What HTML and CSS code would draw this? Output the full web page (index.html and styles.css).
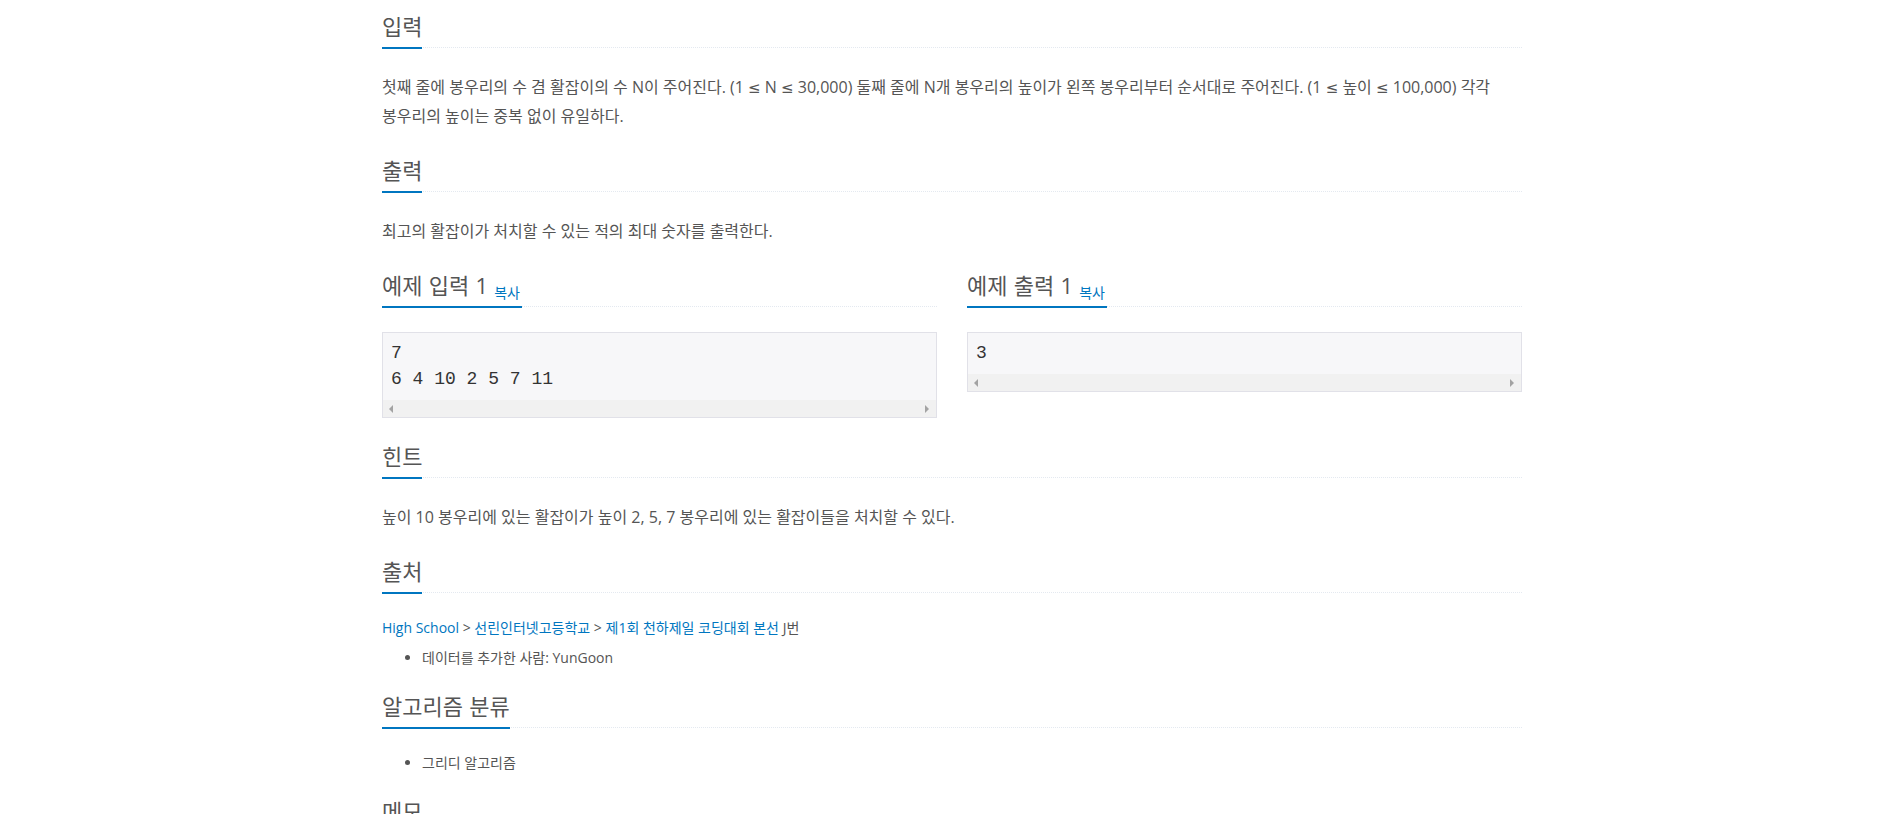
FILE: index.html
```html
<!DOCTYPE html>
<html lang="ko">
<head>
<meta charset="utf-8">
<title>봉우리 활잡이</title>
<link rel="stylesheet" href="styles.css">
</head>
<body>
<div class="container">
  <section class="problem-section">
    <div class="headline"><h2>입력</h2></div>
    <div class="problem-text"><p>첫째 줄에 봉우리의 수 겸 활잡이의 수 N이 주어진다. (1 <span class="op">≤</span> N <span class="op">≤</span> 30,000) 둘째 줄에 N개 봉우리의 높이가 왼쪽 봉우리부터 순서대로 주어진다. (1 <span class="op">≤</span> 높이 <span class="op">≤</span> 100,000) 각각 봉우리의 높이는 중복 없이 유일하다.</p></div>
  </section>

  <section class="problem-section">
    <div class="headline"><h2>출력</h2></div>
    <div class="problem-text"><p>최고의 활잡이가 처치할 수 있는 적의 최대 숫자를 출력한다.</p></div>
  </section>

  <div class="sample-row">
    <section class="problem-section">
      <div class="headline"><h2>예제 입력 1 <button type="button" class="copy-button">복사</button></h2></div>
      <div class="sample">
        <pre class="sampledata">7
6 4 10 2 5 7 11</pre>
        <div class="hscroll"><span class="arr arr-l"></span><span class="arr arr-r"></span></div>
      </div>
    </section>
    <section class="problem-section">
      <div class="headline"><h2>예제 출력 1 <button type="button" class="copy-button">복사</button></h2></div>
      <div class="sample">
        <pre class="sampledata">3</pre>
        <div class="hscroll"><span class="arr arr-l"></span><span class="arr arr-r"></span></div>
      </div>
    </section>
  </div>

  <section class="problem-section">
    <div class="headline"><h2>힌트</h2></div>
    <div class="problem-text"><p>높이 10 봉우리에 있는 활잡이가 높이 2, 5, 7 봉우리에 있는 활잡이들을 처치할 수 있다.</p></div>
  </section>

  <section class="problem-section">
    <div class="headline"><h2>출처</h2></div>
    <p class="source"><a href="#">High School</a> &gt; <a href="#">선린인터넷고등학교</a> &gt; <a href="#">제1회 천하제일 코딩대회 본선</a> J번</p>
    <ul class="plain-list">
      <li>데이터를 추가한 사람: <a class="user" href="#">YunGoon</a></li>
    </ul>
  </section>

  <section class="problem-section">
    <div class="headline"><h2>알고리즘 분류</h2></div>
    <ul class="plain-list">
      <li><a class="tag" href="#">그리디 알고리즘</a></li>
    </ul>
  </section>

  <section class="problem-section">
    <div class="headline"><h2>메모</h2></div>
  </section>
</div>
</body>
</html>
```

FILE: styles.css
```css
html, body {
  margin: 0;
  background: #fff;
}

body {
  padding: 0 0 0 4px;
  font-family: "Open Sans", "Noto Sans CJK KR", sans-serif;
  font-size: 14px;
  line-height: 20px;
  color: #555;
  word-break: keep-all;
}

.container {
  width: 1140px;
  margin: 0 auto;
  padding-top: 1px;
}

.problem-section {
  display: flow-root;
  margin-bottom: 3px;
}

.headline {
  margin: 10px 0 25px 0;
  border-bottom: 1px dotted #e4e9f0;
}

.headline h2 {
  display: inline-block;
  margin: 0 0 -2px 0;
  padding-bottom: 5px;
  border-bottom: 2px solid #0076c0;
  font-size: 22px;
  line-height: 31px;
  font-weight: normal;
  word-spacing: 0.5px;
  color: #555;
}

.problem-text p {
  margin: 0 0 11px 0;
  font-size: 16px;
  line-height: 29px;
  color: #555;
}

.op {
  font-family: "DejaVu Sans", sans-serif;
  font-size: 15px;
  line-height: 20px;
}

.copy-button {
  margin: 0 2px 0 0;
  padding: 0;
  border: 0;
  background: none;
  font-family: "Open Sans", "Noto Sans CJK KR", sans-serif;
  font-size: 14px;
  line-height: 8px;
  word-spacing: 0;
  color: #0076c0;
  vertical-align: -4px;
  cursor: pointer;
}

.sample-row {
  display: grid;
  grid-template-columns: 1fr 1fr;
  column-gap: 30px;
  align-items: start;
}

.sample {
  border: 1px solid #e1e1e8;
  background: #f7f7f9;
  margin-bottom: 10px;
}

.sampledata {
  margin: 0;
  padding: 7px 8px 8px 8px;
  font-family: "Liberation Mono", "DejaVu Sans Mono", monospace;
  font-size: 18px;
  line-height: 26px;
  color: #333;
  white-space: pre;
  overflow: hidden;
}

.hscroll {
  height: 17px;
  background: #f1f1f1;
  display: flex;
  justify-content: space-between;
  align-items: center;
  padding: 0 7px 0 6px;
}

.arr {
  width: 0;
  height: 0;
  border-top: 4px solid transparent;
  border-bottom: 4px solid transparent;
}

.arr-l {
  border-right: 4px solid #a3a3a3;
}

.arr-r {
  border-left: 4px solid #a3a3a3;
}

.source {
  margin: 0 0 10px 0;
  font-size: 14px;
  line-height: 20px;
}

a {
  color: #0076c0;
  text-decoration: none;
}

.plain-list {
  margin: 0 0 10px 0;
  padding-left: 40px;
}

.plain-list li {
  font-size: 14px;
  line-height: 20px;
}

.plain-list a.user,
.plain-list a.tag {
  color: #555;
}
```
